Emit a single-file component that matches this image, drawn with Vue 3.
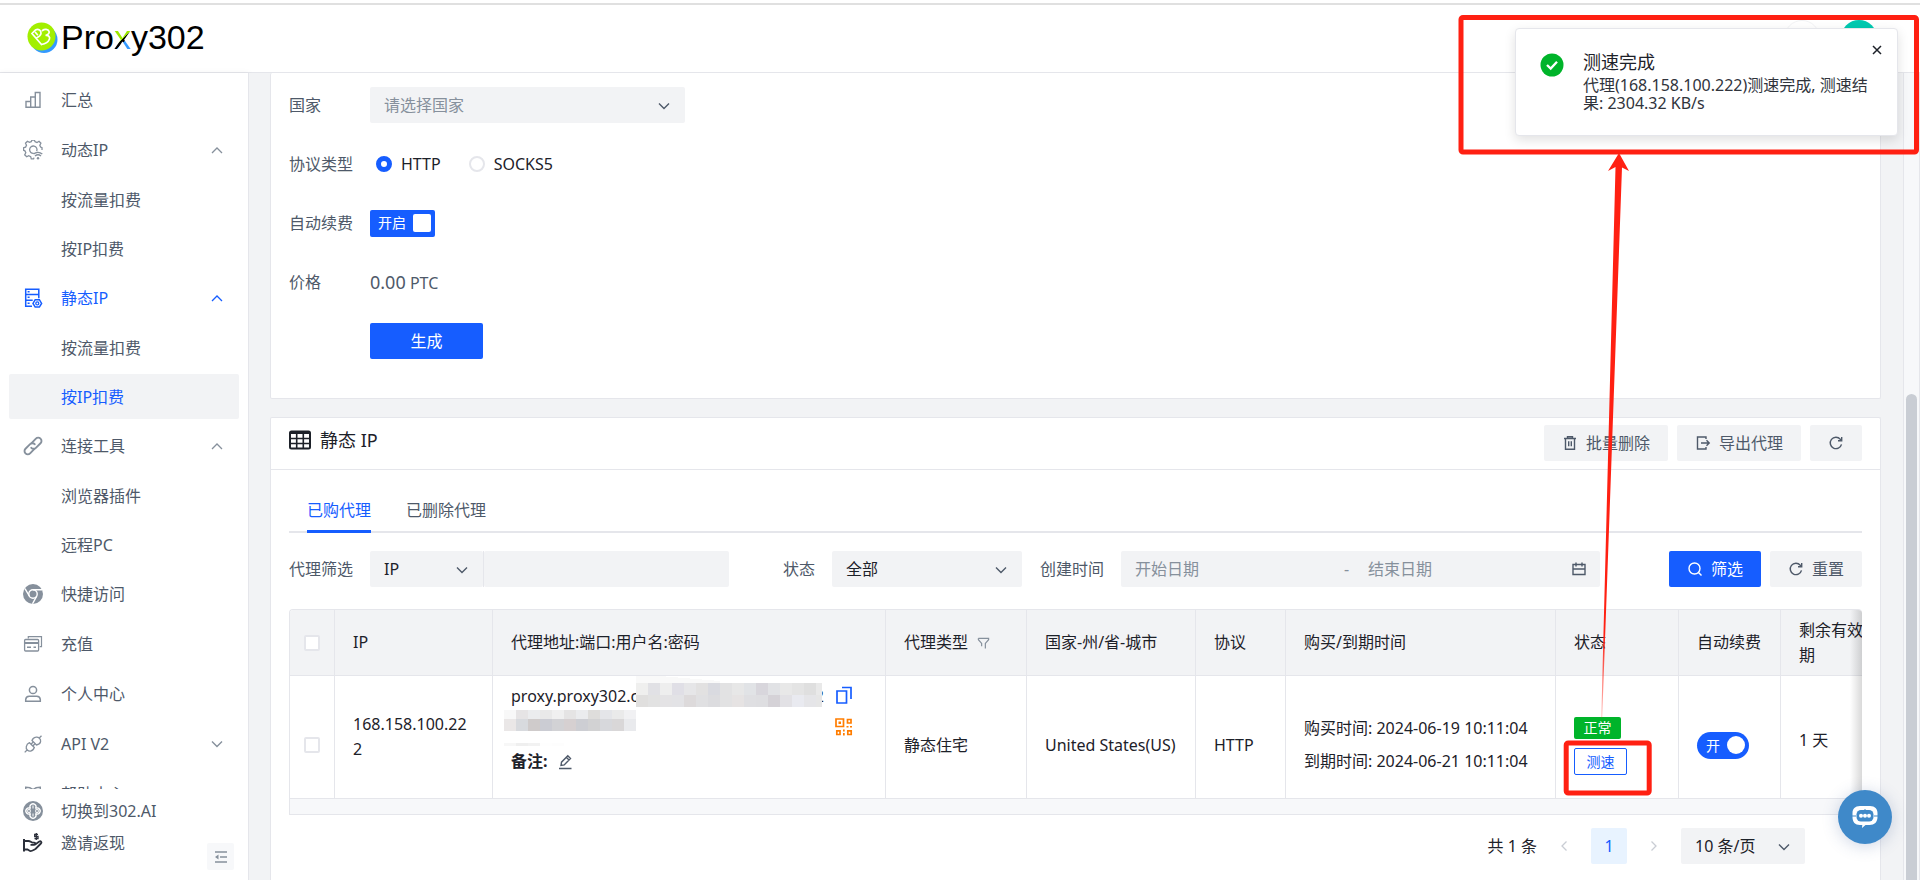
<script setup>
import { ref } from 'vue'

const menu = [
  { label: '汇总', icon: 'chart' },
  {
    label: '动态IP', icon: 'gear', open: true,
    children: [{ label: '按流量扣费' }, { label: '按IP扣费' }]
  },
  {
    label: '静态IP', icon: 'server', open: true, active: true,
    children: [{ label: '按流量扣费' }, { label: '按IP扣费', active: true }]
  },
  {
    label: '连接工具', icon: 'link', open: true,
    children: [{ label: '浏览器插件' }, { label: '远程PC' }]
  },
  { label: '快捷访问', icon: 'chrome' },
  { label: '充值', icon: 'card' },
  { label: '个人中心', icon: 'user' },
  { label: 'API V2', icon: 'plug', open: false, children: [] },
  { label: '帮助中心', icon: 'book' }
]

const protocol = ref('HTTP')
const autoRenew = ref(true)
const rowRenew = ref(true)

const bands = [
  { x: 132, y: 7, h: 12, colors: ['#efefee', '#e1e1e5', '#eeeeee', '#e0dfe6', '#e6e6e8', '#e2e1e1', '#d9dae0', '#e2e2e3', '#e7e7e7', '#e1e3e6', '#d8d6dc', '#e1e2e5', '#e8e8e8', '#e4e4e4', '#dfdfdf', '#e9e9e9'] },
  { x: 132, y: 19, h: 12, colors: ['#e0dfde', '#e2e2e2', '#e4e3e5', '#e3e3e6', '#dddadb', '#e0e0e2', '#dcdcdf', '#e2e2e3', '#e6e3e3', '#dfdfe2', '#dedee1', '#d5d2d7', '#e2e1e5', '#e9eaf0', '#e5e5e8', '#e6e6e6'] },
  { x: 0, y: 34, h: 9, colors: ['#f8f8f8', '#e6e4e5', '#ebecee', '#e9e9e9', '#f0f0f0', '#e5e4e4', '#ebecee', '#dedddb', '#e4e5e9', '#eaeaea', '#f1f1f3'] },
  { x: 0, y: 43, h: 12, colors: ['#eae7e7', '#d8dade', '#cfcbcb', '#cbccd3', '#d2d2d5', '#d6d0d1', '#cdced3', '#d2d2d3', '#d7d8dc', '#d9d7d8', '#e9eaed'] },
  { x: 0, y: 67, h: 3, colors: ['#f7f7f7', '#efefef', '#f2f2f2', '#fefefe', '#fdfdfd'] }
]
const cells = bands.flatMap(b =>
  b.colors.map((fill, i) => ({ x: b.x + i * 12, y: b.y, h: b.h, fill }))
)
</script>

<template>
  <div class="app">
    <svg class="sprite" aria-hidden="true">
      <symbol id="up" viewBox="0 0 12 12"><path d="M1 9l5-5 5 5" fill="none" stroke="currentColor" stroke-width="1.3" /></symbol>
      <symbol id="down" viewBox="0 0 12 12"><path d="M1 3.500l5 5 5-5" fill="none" stroke="currentColor" stroke-width="1.4" /></symbol>
      <symbol id="left" viewBox="0 0 12 12"><path d="M8.500 1.500L4 6l4.500 4.500" fill="none" stroke="currentColor" stroke-width="1.3" /></symbol>
      <symbol id="right" viewBox="0 0 12 12"><path d="M3.500 1.500L8 6l-4.500 4.500" fill="none" stroke="currentColor" stroke-width="1.3" /></symbol>
      <symbol id="chart" viewBox="0 0 20 20"><path d="M3 17.300V11.500h4.700v5.800M7.700 17.300V7h4.600v10.300M12.300 17.300V2.500h4.700v14.800M2.300 17.300h15.400" fill="none" stroke="currentColor" stroke-width="1.4" /></symbol>
      <symbol id="gear" viewBox="0 0 20 20">
        <path d="M11 17.600l-.4 1.200H8.300l-.6-2.200-2-.9-2 1.100-2-2 1.100-2-.9-2-1.300-.5V7.700l2-.6.9-1.900-1-2 1.900-1.900 2 1.100 1.800-.7.700-1.500h2.500l.7 1.500 1.900.8 2-1.200 1.900 1.900-1.100 2 .8 1.900 1.400.6v2.400" fill="none" stroke="currentColor" stroke-width="1.3" />
        <path d="M10.800 13.400a3.700 3.700 0 1 1 2.900-2.200" fill="none" stroke="currentColor" stroke-width="1.300" />
        <path d="M10.500 14c2.500-2 6.300-2 8.800 0M12 16c1.800-1.500 4.200-1.500 6 0" fill="none" stroke="currentColor" stroke-width="1.300" />
        <circle cx="15" cy="18.200" r="1.200" fill="currentColor" />
      </symbol>
      <symbol id="server" viewBox="0 0 20 20">
        <path d="M9 18.300H2.700V1.200h13.100v9M2.700 6.500h13.100M2.700 12.200h7" fill="none" stroke="currentColor" stroke-width="1.500" />
        <path d="M4.600 3.800h2M4.600 9.300h2M4.600 15.200h2" stroke="currentColor" stroke-width="1.500" />
        <path d="M12.200 11.700h4.200l2.200 3.700-2.200 3.700h-4.200L10 15.400z" fill="none" stroke="currentColor" stroke-width="1.500" />
        <circle cx="14.300" cy="15.400" r="1.500" fill="none" stroke="currentColor" stroke-width="1.300" />
      </symbol>
      <symbol id="link" viewBox="0 0 20 20">
        <path d="M8.800 6.800l4.100-4.200a3.200 3.200 0 0 1 4.600 0 3.200 3.200 0 0 1 0 4.600l-4.600 4.600a3.200 3.200 0 0 1-4.600 0" fill="none" stroke="currentColor" stroke-width="1.900" stroke-linecap="round" />
        <path d="M11.200 13.200l-4.100 4.200a3.200 3.200 0 0 1-4.600 0 3.200 3.200 0 0 1 0-4.600l4.600-4.600a3.200 3.200 0 0 1 4.600 0" fill="none" stroke="currentColor" stroke-width="1.900" stroke-linecap="round" />
      </symbol>
      <symbol id="chrome" viewBox="0 0 20 20">
        <circle cx="10" cy="10" r="10" fill="currentColor" />
        <circle cx="10" cy="10" r="4.200" fill="none" stroke="#fff" stroke-width="1.400" />
        <path d="M10 5.800h9M6.300 12L2 4.600M13.700 12.200L9.500 19.800" fill="none" stroke="#fff" stroke-width="1.400" />
      </symbol>
      <symbol id="card" viewBox="0 0 20 20">
        <path d="M5.300 4.500V2.700h13.200v10h-1.800" fill="none" stroke="currentColor" stroke-width="1.200" />
        <rect x="1.600" y="5.500" width="14" height="11.500" rx="1" fill="none" stroke="currentColor" stroke-width="1.300" />
        <path d="M1.600 9h14" stroke="currentColor" stroke-width="2" />
        <path d="M4 13.300h4M10.500 13.300h2.500" stroke="currentColor" stroke-width="1.600" />
      </symbol>
      <symbol id="user" viewBox="0 0 20 20">
        <circle cx="10" cy="6" r="3.600" fill="none" stroke="currentColor" stroke-width="1.500" />
        <path d="M2.700 17.300v-1.800a3.500 3.500 0 0 1 3.500-3.200h7.600a3.500 3.500 0 0 1 3.500 3.200v1.800z" fill="none" stroke="currentColor" stroke-width="1.500" />
      </symbol>
      <symbol id="plug" viewBox="0 0 20 20">
        <path d="M9 6.500l4.500 4.500c1.800-.3 3.700-1 4.100-3.300.2-1.200-.3-2.500-1.200-3.400-1-1-2.400-1.400-3.500-1.100C10.700 3.500 9.600 4.800 9 6.500zM16.500 3.700L18.500 1.700" fill="none" stroke="currentColor" stroke-width="1.300" />
        <path d="M6.500 8.700L11.300 13.500c-.6 1.800-1.500 3.200-3.700 3.600-1.200.2-2.400-.2-3.300-1.100-.9-.9-1.300-2.200-1-3.400.4-2.100 1.500-3.200 3.200-3.900zM3.800 16.300L1.700 18.400M8 10.200l2.200-2.200M9.800 12l2.200-2.200" fill="none" stroke="currentColor" stroke-width="1.300" />
      </symbol>
      <symbol id="book" viewBox="0 0 20 20"><path d="M2.700 17V3.300c3 0 5.500.6 7.300 2.300 1.800-1.700 4.300-2.300 7.300-2.300V17c-3 0-5.500.3-7.300 1.500C8.200 17.300 5.700 17 2.700 17zM2.700 6.300c3 0 5.500.6 7.300 2.300 1.800-1.700 4.300-2.300 7.300-2.300" fill="none" stroke="currentColor" stroke-width="1.400" /></symbol>
      <symbol id="clover" viewBox="0 0 20 20">
        <circle cx="10" cy="10" r="10" fill="currentColor" />
        <g fill="none" stroke="#fff" stroke-width="1.300">
          <path d="M7.500 7.500a3 3 0 1 1 5 0 3 3 0 1 1 0 5 3 3 0 1 1-5 0 3 3 0 1 1 0-5z" />
          <path d="M7.200 10a1.300 1.300 0 1 1-2.400 0 1.300 1.300 0 1 1 2.400 0zM15.200 10a1.300 1.300 0 1 1-2.400 0 1.300 1.300 0 1 1 2.400 0zM10 4.500v3M10 12.500v3" stroke-width="1" />
        </g>
      </symbol>
      <symbol id="hand" viewBox="0 0 20 20">
        <path d="M1 6v12.500" stroke="currentColor" stroke-width="2" />
        <path d="M2 8h3.500c2 0 2.500 1.600 4.200 1.600h1.500c1.500 0 1.500 2.200 0 2.200H7.500M11.800 11.800l4.500-3.300c1.600-.8 2.800.8 1.600 2L12.500 16c-2 1-4 2.500-5.500 2L4.500 16.500H2" fill="none" stroke="currentColor" stroke-width="1.800" />
        <path d="M15 1.300h-3.300v2.200H15v2.200h-3.500M13.300 0v7" fill="none" stroke="currentColor" stroke-width="1.300" />
      </symbol>
      <symbol id="fold" viewBox="0 0 14 14"><path d="M1 2h12M6 7h7M1 12h12" stroke="currentColor" stroke-width="1.300" /><path d="M4.500 4.500v5L1 7z" fill="currentColor" /></symbol>
      <symbol id="grid" viewBox="0 0 22 20">
        <rect x="1" y="1.500" width="20" height="17" rx="1.500" fill="none" stroke="currentColor" stroke-width="2" />
        <path d="M1 3h20" stroke="currentColor" stroke-width="2" />
        <path d="M1 8.500h20M1 13.500h20M7.700 3v15.500M14.300 3v15.500" stroke="currentColor" stroke-width="1.600" />
      </symbol>
      <symbol id="trash" viewBox="0 0 16 16"><path d="M2 3.500h12M5.500 3.300V1.700h5v1.600M3.500 3.500v10.800h9V3.500M6.700 6.300v5M9.300 6.300v5" fill="none" stroke="currentColor" stroke-width="1.400" /></symbol>
      <symbol id="export" viewBox="0 0 16 16"><path d="M11 4V2H2.500v12H11v-2M6 8h8M11.500 5.300L14.200 8l-2.700 2.700" fill="none" stroke="currentColor" stroke-width="1.400" /></symbol>
      <symbol id="refresh" viewBox="0 0 16 16"><path d="M13.500 9.300A5.700 5.700 0 1 1 12.300 4.200L13.500 5.500M13.700 2v3.700H10" fill="none" stroke="currentColor" stroke-width="1.400" /></symbol>
      <symbol id="search" viewBox="0 0 16 16"><circle cx="7.500" cy="7.500" r="5.500" fill="none" stroke="currentColor" stroke-width="1.400" /><path d="M11.500 11.500l3 3" stroke="currentColor" stroke-width="1.400" /></symbol>
      <symbol id="calendar" viewBox="0 0 16 16"><path d="M2 3.500h12v10H2zM2 8h12M5 1.500v4M11 1.500v4" fill="none" stroke="currentColor" stroke-width="1.400" /></symbol>
      <symbol id="funnel" viewBox="0 0 14 14"><path d="M1.500 2h11v1.500L9 7.500V13M5 10.500v-3L1.500 3.500V2" fill="none" stroke="currentColor" stroke-width="1.300" /></symbol>
      <symbol id="copy" viewBox="0 0 18 18"><path d="M2 5h9.500v12H2z" fill="none" stroke="currentColor" stroke-width="1.700" /><path d="M7 1.500h9V13" fill="none" stroke="currentColor" stroke-width="1.700" /></symbol>
      <symbol id="qr" viewBox="0 0 18 18">
        <path d="M1 1h7.500v7.500H1zM12.500 1.500H16V5h-3.500zM1.800 12.800H5v3.700H1.800zM12.800 12.800h3.400v3.700h-3.400z" fill="none" stroke="currentColor" stroke-width="1.700" />
        <path d="M3.500 3.500H6V6H3.500zM11.500 8h2v1.500h-2zM15 8h2v1.500h-2zM8 11.500h1.700v2H8zM8 15h1.700v2.500H8z" fill="currentColor" />
      </symbol>
      <symbol id="edit" viewBox="0 0 16 16"><path d="M4 11.500l.5-3.300 6.300-6.500 2.700 2.700-6.300 6.500zM9.500 3.500L12 6M2 14.500h12.500" fill="none" stroke="currentColor" stroke-width="1.400" /></symbol>
      <symbol id="close" viewBox="0 0 12 12"><path d="M2 2l8 8M10 2l-8 8" stroke="currentColor" stroke-width="1.500" /></symbol>
    </svg>

    <header class="topbar">
      <a class="logo" href="#" aria-label="Proxy302">
        <svg class="mark" viewBox="0 0 32 32" aria-hidden="true">
          <circle cx="17" cy="17.500" r="13.500" fill="#3399ff" />
          <circle cx="14.500" cy="14.500" r="14" fill="#a2ef00" />
          <path d="M14.500 22.500L5 11.500 8.500 8c3-1.500 5.800.5 5.500 3.500-.3 2.200-2 3.300-4.500 4.500M15.500 8.500c2-1.700 5.600-1.500 6.500.7.700 2-.8 3.500-3.500 4.300 3-.6 4.800 1.500 3.900 3.800-1 2.500-3.900 4.500-7.900 5.200M8.500 10.500l2 2.200" fill="none" stroke="#fff" stroke-width="1.700" stroke-linecap="round" />
        </svg>
        <span class="word">Pro<span class="word-x">x</span>y302</span>
      </a>
      <div class="avatars">
        <span class="round plain"></span>
        <span class="round teal"></span>
      </div>
    </header>

    <div class="body">
      <aside class="sidebar">
        <nav class="menu">
          <template v-for="item in menu" :key="item.label">
            <a href="#" class="item" :class="{ active: item.active }">
              <svg class="item-icon"><use :href="'#' + item.icon" /></svg>
              <span>{{ item.label }}</span>
              <svg v-if="item.children" class="caret"><use :href="item.open ? '#up' : '#down'" /></svg>
            </a>
            <a
              v-for="(child, i) in item.children || []" :key="i"
              href="#" class="item child" :class="{ active: child.active, selected: child.active }"
            >{{ child.label }}</a>
          </template>
        </nav>
        <div class="side-foot">
          <a href="#" class="foot-item"><svg class="item-icon"><use href="#clover" /></svg>切换到302.AI</a>
          <a href="#" class="foot-item"><svg class="item-icon dark"><use href="#hand" /></svg>邀请返现</a>
          <button class="fold" type="button" aria-label="收起菜单"><svg><use href="#fold" /></svg></button>
        </div>
      </aside>

      <main class="main">
        <section class="card form-card">
          <div class="row">
            <label class="lab" for="country">国家</label>
            <div class="select country">
              <select id="country" class="placeholder"><option>请选择国家</option></select>
              <svg><use href="#down" /></svg>
            </div>
          </div>
          <div class="row">
            <span class="lab">协议类型</span>
            <div class="radios">
              <label class="radio"><input v-model="protocol" type="radio" name="protocol" value="HTTP" />HTTP</label>
              <label class="radio"><input v-model="protocol" type="radio" name="protocol" value="SOCKS5" />SOCKS5</label>
            </div>
          </div>
          <div class="row">
            <span class="lab">自动续费</span>
            <button class="switch" type="button" role="switch" :aria-checked="autoRenew" @click="autoRenew = !autoRenew">开启<i class="knob"></i></button>
          </div>
          <div class="row">
            <span class="lab">价格</span>
            <span class="price"><b>0.00</b> PTC</span>
          </div>
          <div class="row">
            <span class="lab"></span>
            <button class="btn primary generate" type="button">生成</button>
          </div>
        </section>

        <section class="card list-card">
          <div class="card-head">
            <h2><svg><use href="#grid" /></svg>静态 IP</h2>
            <div class="actions">
              <button class="btn" type="button"><svg><use href="#trash" /></svg>批量删除</button>
              <button class="btn" type="button"><svg><use href="#export" /></svg>导出代理</button>
              <button class="btn" type="button" aria-label="刷新"><svg><use href="#refresh" /></svg></button>
            </div>
          </div>

          <div class="card-body">
            <div class="tabs" role="tablist">
              <button class="tab on" type="button" role="tab" aria-selected="true">已购代理</button>
              <button class="tab" type="button" role="tab" aria-selected="false">已删除代理</button>
            </div>

            <div class="filters">
              <label class="lab" for="field">代理筛选</label>
              <div class="group">
                <div class="select"><select id="field"><option>IP</option></select><svg><use href="#down" /></svg></div>
                <input type="text" aria-label="筛选内容" />
              </div>
              <label for="state" class="state-lab">状态</label>
              <div class="select state"><select id="state"><option>全部</option></select><svg><use href="#down" /></svg></div>
              <label for="start" class="date-lab">创建时间</label>
              <div class="dates">
                <input id="start" type="text" placeholder="开始日期" />
                <span>-</span>
                <input type="text" placeholder="结束日期" aria-label="结束日期" />
                <svg><use href="#calendar" /></svg>
              </div>
              <div class="actions filter-actions">
                <button class="btn primary" type="button"><svg><use href="#search" /></svg>筛选</button>
                <button class="btn" type="button"><svg><use href="#refresh" /></svg>重置</button>
              </div>
            </div>

            <div class="table-box">
              <table>
                <colgroup>
                  <col class="c-check" /><col class="c-ip" /><col class="c-addr" /><col class="c-type" /><col class="c-geo" />
                  <col class="c-proto" /><col class="c-time" /><col class="c-state" /><col class="c-renew" /><col class="c-left" />
                </colgroup>
                <thead>
                  <tr>
                    <th class="check"><input type="checkbox" aria-label="全选" /></th>
                    <th>IP</th>
                    <th>代理地址:端口:用户名:密码</th>
                    <th><span class="th-filter">代理类型<svg><use href="#funnel" /></svg></span></th>
                    <th>国家-州/省-城市</th>
                    <th>协议</th>
                    <th>购买/到期时间</th>
                    <th>状态</th>
                    <th>自动续费</th>
                    <th>剩余有效期</th>
                  </tr>
                </thead>
                <tbody>
                  <tr>
                    <td class="check low"><input type="checkbox" aria-label="选择 168.158.100.222" /></td>
                    <td class="ip">168.158.100.222</td>
                    <td class="addr">
                      <div class="addr-box">
                        <div class="addr-line"><span>proxy.proxy302.c</span><span>2</span></div>
                        <div class="note"><strong>备注:</strong><button type="button" class="icon-btn" aria-label="编辑备注"><svg><use href="#edit" /></svg></button></div>
                        <svg class="mosaic" viewBox="0 0 318 70" shape-rendering="crispEdges" aria-hidden="true">
                          <path d="M132 0h24l60 5v2h-84z" fill="#f9f9f9" />
                          <rect v-for="(c, i) in cells" :key="i" :x="c.x" :y="c.y" width="12" :height="c.h" :fill="c.fill" />
                        </svg>
                        <div class="tools">
                          <button type="button" class="icon-btn copy" aria-label="复制"><svg><use href="#copy" /></svg></button>
                          <button type="button" class="icon-btn qr" aria-label="二维码"><svg><use href="#qr" /></svg></button>
                        </div>
                      </div>
                    </td>
                    <td class="low">静态住宅</td>
                    <td class="low">United States(US)</td>
                    <td class="low">HTTP</td>
                    <td class="low time">购买时间: 2024-06-19 10:11:04<br />到期时间: 2024-06-21 10:11:04</td>
                    <td class="low">
                      <div class="state-box">
                        <span class="tag">正常</span>
                        <button class="speed" type="button">测速</button>
                      </div>
                    </td>
                    <td class="low"><button class="switch pill" type="button" role="switch" aria-label="自动续费" :aria-checked="rowRenew" @click="rowRenew = !rowRenew">开<i class="knob"></i></button></td>
                    <td class="days">1 天</td>
                  </tr>
                </tbody>
              </table>
              <div class="hbar"></div>
              <div class="edge"></div>
            </div>

            <div class="pager">
              <span>共 1 条</span>
              <button type="button" class="page arrow" aria-label="上一页"><svg><use href="#left" /></svg></button>
              <button type="button" class="page current">1</button>
              <button type="button" class="page arrow" aria-label="下一页"><svg><use href="#right" /></svg></button>
              <div class="select size"><select aria-label="每页条数"><option>10 条/页</option></select><svg><use href="#down" /></svg></div>
            </div>
          </div>
        </section>
      </main>
      <div class="scroll"><div class="thumb"></div></div>
    </div>

    <button class="chat" type="button" aria-label="在线客服">
      <svg viewBox="0 0 28 24" aria-hidden="true">
        <path d="M9 1h10c5 0 7.500 3 7.500 7v4c0 5-3 8-8 8h-4l-3.500 3 .3-3H9c-5 0-7.500-3-7.500-8V8c0-4 2.500-7 7.500-7z" fill="#fff" />
        <rect x="5.500" y="5" width="17" height="11.500" rx="4.500" fill="#3f89c9" />
        <path d="M14 4v2M1 11h4M23 11h4" stroke="#3f89c9" stroke-width="1" />
        <g fill="#fff"><circle cx="10" cy="10.800" r="2" /><circle cx="14" cy="10.800" r="2" /><circle cx="18" cy="10.800" r="2" /></g>
      </svg>
    </button>

    <div class="toast" role="alert">
      <svg class="ok" viewBox="0 0 24 24" aria-hidden="true"><circle cx="12" cy="12" r="11.500" fill="#00b42a" /><path d="M7 12l3.700 3.600L17 8.800" fill="none" stroke="#fff" stroke-width="2.300" /></svg>
      <div class="toast-text">
        <h3>测速完成</h3>
        <p>代理(168.158.100.222)测速完成, 测速结果: 2304.32 KB/s</p>
      </div>
      <button type="button" class="icon-btn toast-close" aria-label="关闭"><svg><use href="#close" /></svg></button>
    </div>

    <svg class="marks" viewBox="0 0 480 880" aria-hidden="true">
      <defs>
        <linearGradient id="fade" x1="0" y1="0" x2="0" y2="1">
          <stop offset="0.850" stop-color="#ff2012" />
          <stop offset="1" stop-color="#ff2012" stop-opacity="0.250" />
        </linearGradient>
      </defs>
      <rect x="21" y="17.500" width="455.500" height="134.500" rx="2" fill="none" stroke="#ff2012" stroke-width="5" />
      <rect x="126.200" y="743" width="83" height="50" rx="2" fill="none" stroke="#ff2012" stroke-width="5" />
      <path d="M179 153l10 18-7-3.500L162.200 718h-.9L175.500 167l-7.500 4z" fill="url(#fade)" />
    </svg>
  </div>
</template>

<style>
body {
  margin: 0;
}
</style>

<style scoped>
.app {
  position: relative;
  display: flex;
  flex-direction: column;
  height: 100vh;
  overflow: hidden;
  background: #fff;
  color: #1d2129;
  font-family: "Noto Sans", "Noto Sans CJK SC", sans-serif;
  font-size: 16px;
  line-height: 24px;
}
.app * {
  box-sizing: border-box;
}
button,
input,
select {
  margin: 0;
  padding: 0;
  border: 0;
  background: none;
  color: inherit;
  font: inherit;
}
a {
  color: inherit;
  text-decoration: none;
}
svg {
  flex: none;
}
.sprite {
  position: absolute;
  width: 0;
  height: 0;
}

/* Header */
.topbar {
  display: flex;
  justify-content: space-between;
  align-items: flex-start;
  flex: none;
  height: 70px;
  margin-top: 3px;
  padding: 0 43px 0 27px;
  border-top: 2px solid #e0e0e0;
  border-bottom: 1px solid #e5e6eb;
}
.logo {
  display: flex;
  align-items: center;
  gap: 2px;
  margin-top: 13px;
  color: #000;
}
.mark {
  width: 32px;
  height: 32px;
  margin-top: 2px;
}
.word {
  font-family: "Liberation Sans", Arial, sans-serif;
  font-size: 34px;
  line-height: 38px;
}
.word-x {
  background: linear-gradient(137deg, #9be800 53%, #000 54%, #000 61%, #3399ff 62%);
  background-clip: text;
  -webkit-background-clip: text;
  color: transparent;
}
.avatars {
  display: flex;
  gap: 21px;
  padding-top: 15px;
}
.round {
  width: 36px;
  height: 36px;
  border-radius: 50%;
}
.plain {
  border: 1px solid #f2f3f5;
}
.teal {
  background: #00c9b0;
}

/* Sidebar */
.body {
  display: flex;
  flex: 1;
  min-height: 0;
}
.sidebar {
  display: flex;
  flex-direction: column;
  flex: none;
  width: 249px;
  border-right: 1px solid #e5e6eb;
  background: #fff;
  color: #4e5969;
  box-shadow: 0 0 6px rgba(0, 0, 0, 0.06);
}
.menu {
  display: flex;
  flex: 1;
  flex-direction: column;
  gap: 4px;
  min-height: 0;
  padding: 4px 9px 0;
  overflow: hidden;
}
.item {
  display: flex;
  align-items: center;
  flex: none;
  height: 46px;
  padding: 0 16px 0 14px;
  border-radius: 2px;
}
.item-icon {
  width: 20px;
  height: 20px;
  margin-right: 18px;
  color: #86909c;
}
.item-icon.dark {
  color: #2b2f3a;
}
.item.child {
  height: 45px;
  padding-left: 52px;
}
.item.active,
.item.active .item-icon,
.item.active .caret {
  color: #165dff;
}
.item.selected {
  background: #f2f3f5;
}
.caret {
  width: 12px;
  height: 12px;
  margin-left: auto;
  color: #86909c;
}
.side-foot {
  position: relative;
  height: 91px;
  padding: 6px 23px 0;
}
.foot-item {
  display: flex;
  align-items: center;
  height: 32px;
}
.fold {
  position: absolute;
  right: 14px;
  bottom: 10px;
  display: grid;
  place-items: center;
  width: 27px;
  height: 27px;
  border-radius: 2px;
  background: #f7f8fa;
  color: #86909c;
}
.fold svg {
  width: 14px;
  height: 14px;
}

/* Main */
.main {
  display: flex;
  flex: 1;
  flex-direction: column;
  gap: 18px;
  min-width: 0;
  overflow: hidden;
  padding: 0 22px 0 21px;
  background: #f2f3f5;
}
.card {
  border: 1px solid #e5e6eb;
  border-radius: 2px;
  background: #fff;
}
.form-card {
  display: flex;
  flex: none;
  flex-direction: column;
  gap: 23px;
  padding: 14px 18px 39px;
  border-top: 0;
}
.row {
  display: flex;
  align-items: center;
  height: 36px;
}
.lab {
  flex: none;
  width: 81px;
}
.lab,
.filters label,
.price {
  color: #4e5969;
}
.select {
  position: relative;
}
.select select {
  appearance: none;
  display: block;
  width: 100%;
  height: 36px;
  padding: 0 36px 0 14px;
  border-radius: 2px;
  background: #f2f3f5;
}
.select select.placeholder {
  color: #86909c;
}
.select svg {
  position: absolute;
  top: 13px;
  right: 15px;
  width: 12px;
  height: 12px;
  color: #4e5969;
  pointer-events: none;
}
.country {
  width: 315px;
}
.radios {
  display: flex;
  gap: 28px;
  padding-left: 6px;
}
.radio {
  display: flex;
  align-items: center;
  gap: 9px;
}
.radio input {
  appearance: none;
  width: 16px;
  height: 16px;
  border: 2px solid #e5e6eb;
  border-radius: 50%;
  background: #fff;
}
.radio input:checked {
  border: 5px solid #165dff;
}
.switch {
  display: flex;
  align-items: center;
  justify-content: space-between;
  width: 65px;
  height: 27px;
  padding: 0 4px 0 8px;
  border-radius: 2px;
  background: #165dff;
  color: #fff;
  font-size: 14px;
}
.knob {
  width: 18px;
  height: 18px;
  border-radius: 2px;
  background: #fff;
}
.switch.pill {
  width: 52px;
  padding-left: 9px;
  border-radius: 14px;
}
.pill .knob {
  border-radius: 50%;
}
.price b {
  font-size: 18px;
  font-weight: 400;
}
.btn {
  display: flex;
  align-items: center;
  justify-content: center;
  gap: 8px;
  height: 36px;
  padding: 0 18px;
  border-radius: 2px;
  background: #f2f3f5;
  color: #4e5969;
  white-space: nowrap;
}
.btn svg {
  width: 16px;
  height: 16px;
}
.btn.primary {
  background: #165dff;
  color: #fff;
}
.generate {
  width: 113px;
}
.actions {
  display: flex;
  gap: 9px;
}

/* List card */
.list-card {
  flex: 1 0 auto;
  border-bottom: 0;
}
.card-head {
  display: flex;
  justify-content: space-between;
  height: 52px;
  padding: 7px 18px;
  border-bottom: 1px solid #e5e6eb;
}
.card-head h2 {
  display: flex;
  align-items: center;
  gap: 9px;
  height: 30px;
  margin: 0;
  font-size: 18px;
  font-weight: 400;
}
.card-head h2 svg {
  width: 22px;
  height: 20px;
}
.card-body {
  padding: 18px;
}
.tabs {
  display: flex;
  gap: 35px;
  height: 45px;
  padding: 0 18px;
  box-shadow: inset 0 -2px #e5e6eb;
}
.tab {
  padding-top: 2px;
  border-bottom: 3px solid transparent;
  color: #4e5969;
}
.tab.on {
  border-bottom-color: #165dff;
  color: #165dff;
}
.filters {
  display: flex;
  align-items: center;
  margin-top: 18px;
}
.group {
  display: flex;
  flex: 359 1 359px;
  min-width: 0;
}
.group .select {
  flex: none;
  width: 114px;
  border-right: 1px solid #e5e6eb;
}
.group input {
  flex: 1;
  min-width: 0;
  height: 36px;
  padding: 0 14px;
  border-radius: 2px;
  background: #f2f3f5;
}
.state-lab {
  flex: none;
  margin: 0 17px 0 54px;
}
.select.state {
  flex: 190 1 190px;
}
.date-lab {
  flex: none;
  margin: 0 17px 0 18px;
}
.dates {
  display: flex;
  align-items: center;
  flex: 479 1 479px;
  min-width: 0;
  height: 36px;
  padding: 0 13px 0 14px;
  border-radius: 2px;
  background: #f2f3f5;
  color: #86909c;
}
.dates input {
  flex: 1;
  min-width: 0;
}
.dates span {
  width: 30px;
  padding-left: 6px;
}
.dates input::placeholder {
  color: #86909c;
}
.dates svg {
  width: 16px;
  height: 16px;
  color: #4e5969;
}
.filter-actions {
  margin-left: 69px;
}

/* Table */
.table-box {
  position: relative;
  margin-top: 22px;
  overflow: hidden;
  border: 1px solid #e5e6eb;
  border-right: 0;
  border-radius: 4px 4px 0 0;
}
table {
  width: 1594px;
  table-layout: fixed;
  border-collapse: separate;
  border-spacing: 0;
  line-height: 25px;
}
.c-check { width: 45px; }
.c-ip { width: 158px; }
.c-addr { width: 393px; }
.c-type { width: 141px; }
.c-geo { width: 169px; }
.c-proto { width: 90px; }
.c-time { width: 270px; }
.c-state { width: 123px; }
.c-renew { width: 102px; }
.c-left { width: 103px; }
th,
td {
  padding: 0 18px;
  border-right: 1px solid #e5e6eb;
  border-bottom: 1px solid #e5e6eb;
  text-align: left;
  word-break: break-all;
}
th {
  height: 66px;
  background: #f2f3f5;
  font-weight: 400;
}
td {
  height: 123px;
}
td.low {
  padding-top: 16px;
}
td.days {
  padding-top: 6px;
}
th.check,
td.check {
  padding-left: 14px;
  padding-right: 0;
}
.check input {
  appearance: none;
  display: block;
  width: 16px;
  height: 16px;
  border: 2px solid #e5e6eb;
  border-radius: 2px;
  background: #fff;
}
.th-filter {
  display: flex;
  align-items: center;
  gap: 9px;
  white-space: nowrap;
}
.th-filter svg {
  width: 13px;
  height: 14px;
  color: #86909c;
}
.time {
  line-height: 33px;
  white-space: nowrap;
}
td.addr {
  padding-top: 8px;
  vertical-align: top;
}
.addr-box {
  position: relative;
}
.addr-line {
  display: flex;
  justify-content: space-between;
  width: 313px;
}
.note {
  display: flex;
  align-items: center;
  gap: 9px;
  margin-top: 40px;
}
.icon-btn {
  display: block;
  line-height: 0;
}
.note svg {
  width: 16px;
  height: 16px;
  color: #4e5969;
}
.mosaic {
  position: absolute;
  top: -8px;
  left: -7px;
  width: 318px;
  height: 70px;
}
.tools {
  position: absolute;
  top: 2px;
  right: 14px;
  display: grid;
  gap: 14px;
}
.tools svg {
  width: 18px;
  height: 18px;
}
.copy {
  color: #165dff;
}
.qr {
  color: #ff7d00;
}
.state-box {
  display: grid;
  gap: 9px;
  justify-items: start;
  padding-top: 1px;
  font-size: 14px;
}
.tag {
  width: 47px;
  border-radius: 2px;
  background: #00b42a;
  color: #fff;
  line-height: 22px;
  text-align: center;
}
.speed {
  width: 53px;
  height: 27px;
  border: 1px solid #165dff;
  border-radius: 2px;
  color: #165dff;
  line-height: 25px;
}
.hbar {
  height: 15px;
  background: #f7f8fa;
}
.edge {
  position: absolute;
  top: 0;
  right: 0;
  bottom: 16px;
  width: 12px;
  background: linear-gradient(to right, rgba(0, 0, 0, 0), rgba(0, 0, 0, 0.15));
}
.pager {
  display: flex;
  align-items: center;
  justify-content: flex-end;
  gap: 9px;
  margin-top: 13px;
  padding-right: 57px;
}
.page {
  display: grid;
  place-items: center;
  width: 36px;
  height: 36px;
  border-radius: 2px;
}
.page.current {
  background: #e8f3ff;
  color: #165dff;
}
.page.arrow {
  color: #c9cdd4;
}
.page svg {
  width: 12px;
  height: 12px;
}
.select.size {
  width: 124px;
}
.scroll {
  flex: none;
  width: 17px;
  padding: 321px 2px 0;
  border-right: 1px solid #e5e6eb;
  border-left: 1px solid #e5e6eb;
  background: #f7f8fa;
}
.thumb {
  height: 100%;
  border-radius: 6px 6px 0 0;
  background: #c9cdd4;
}

/* Floating layers */
.chat {
  position: absolute;
  right: 28px;
  bottom: 36px;
  display: grid;
  place-items: center;
  width: 54px;
  height: 54px;
  border-radius: 50%;
  background: #3f89c9;
  box-shadow: 0 2px 16px rgba(60, 90, 150, 0.25);
}
.chat svg {
  width: 28px;
  height: 24px;
}
.toast {
  position: absolute;
  top: 28px;
  right: 22px;
  display: flex;
  width: 383px;
  padding: 20px 19px 23px 24px;
  border: 1px solid #e5e6eb;
  border-radius: 4px;
  background: #fff;
  box-shadow: 0 4px 12px rgba(0, 0, 0, 0.12);
}
.ok {
  width: 24px;
  height: 24px;
  margin-top: 4px;
}
.toast-text {
  flex: 1;
  margin-left: 19px;
}
.toast-text h3 {
  margin: 0 0 1px;
  font-size: 18px;
  font-weight: 400;
  line-height: 26px;
}
.toast-text p {
  margin: 0;
  color: #30343c;
  line-height: 18px;
}
.toast-close {
  position: absolute;
  top: 15px;
  right: 14px;
}
.toast-close svg {
  width: 12px;
  height: 12px;
}
.marks {
  position: absolute;
  top: 0;
  right: 0;
  width: 480px;
  height: 880px;
  pointer-events: none;
}
</style>
